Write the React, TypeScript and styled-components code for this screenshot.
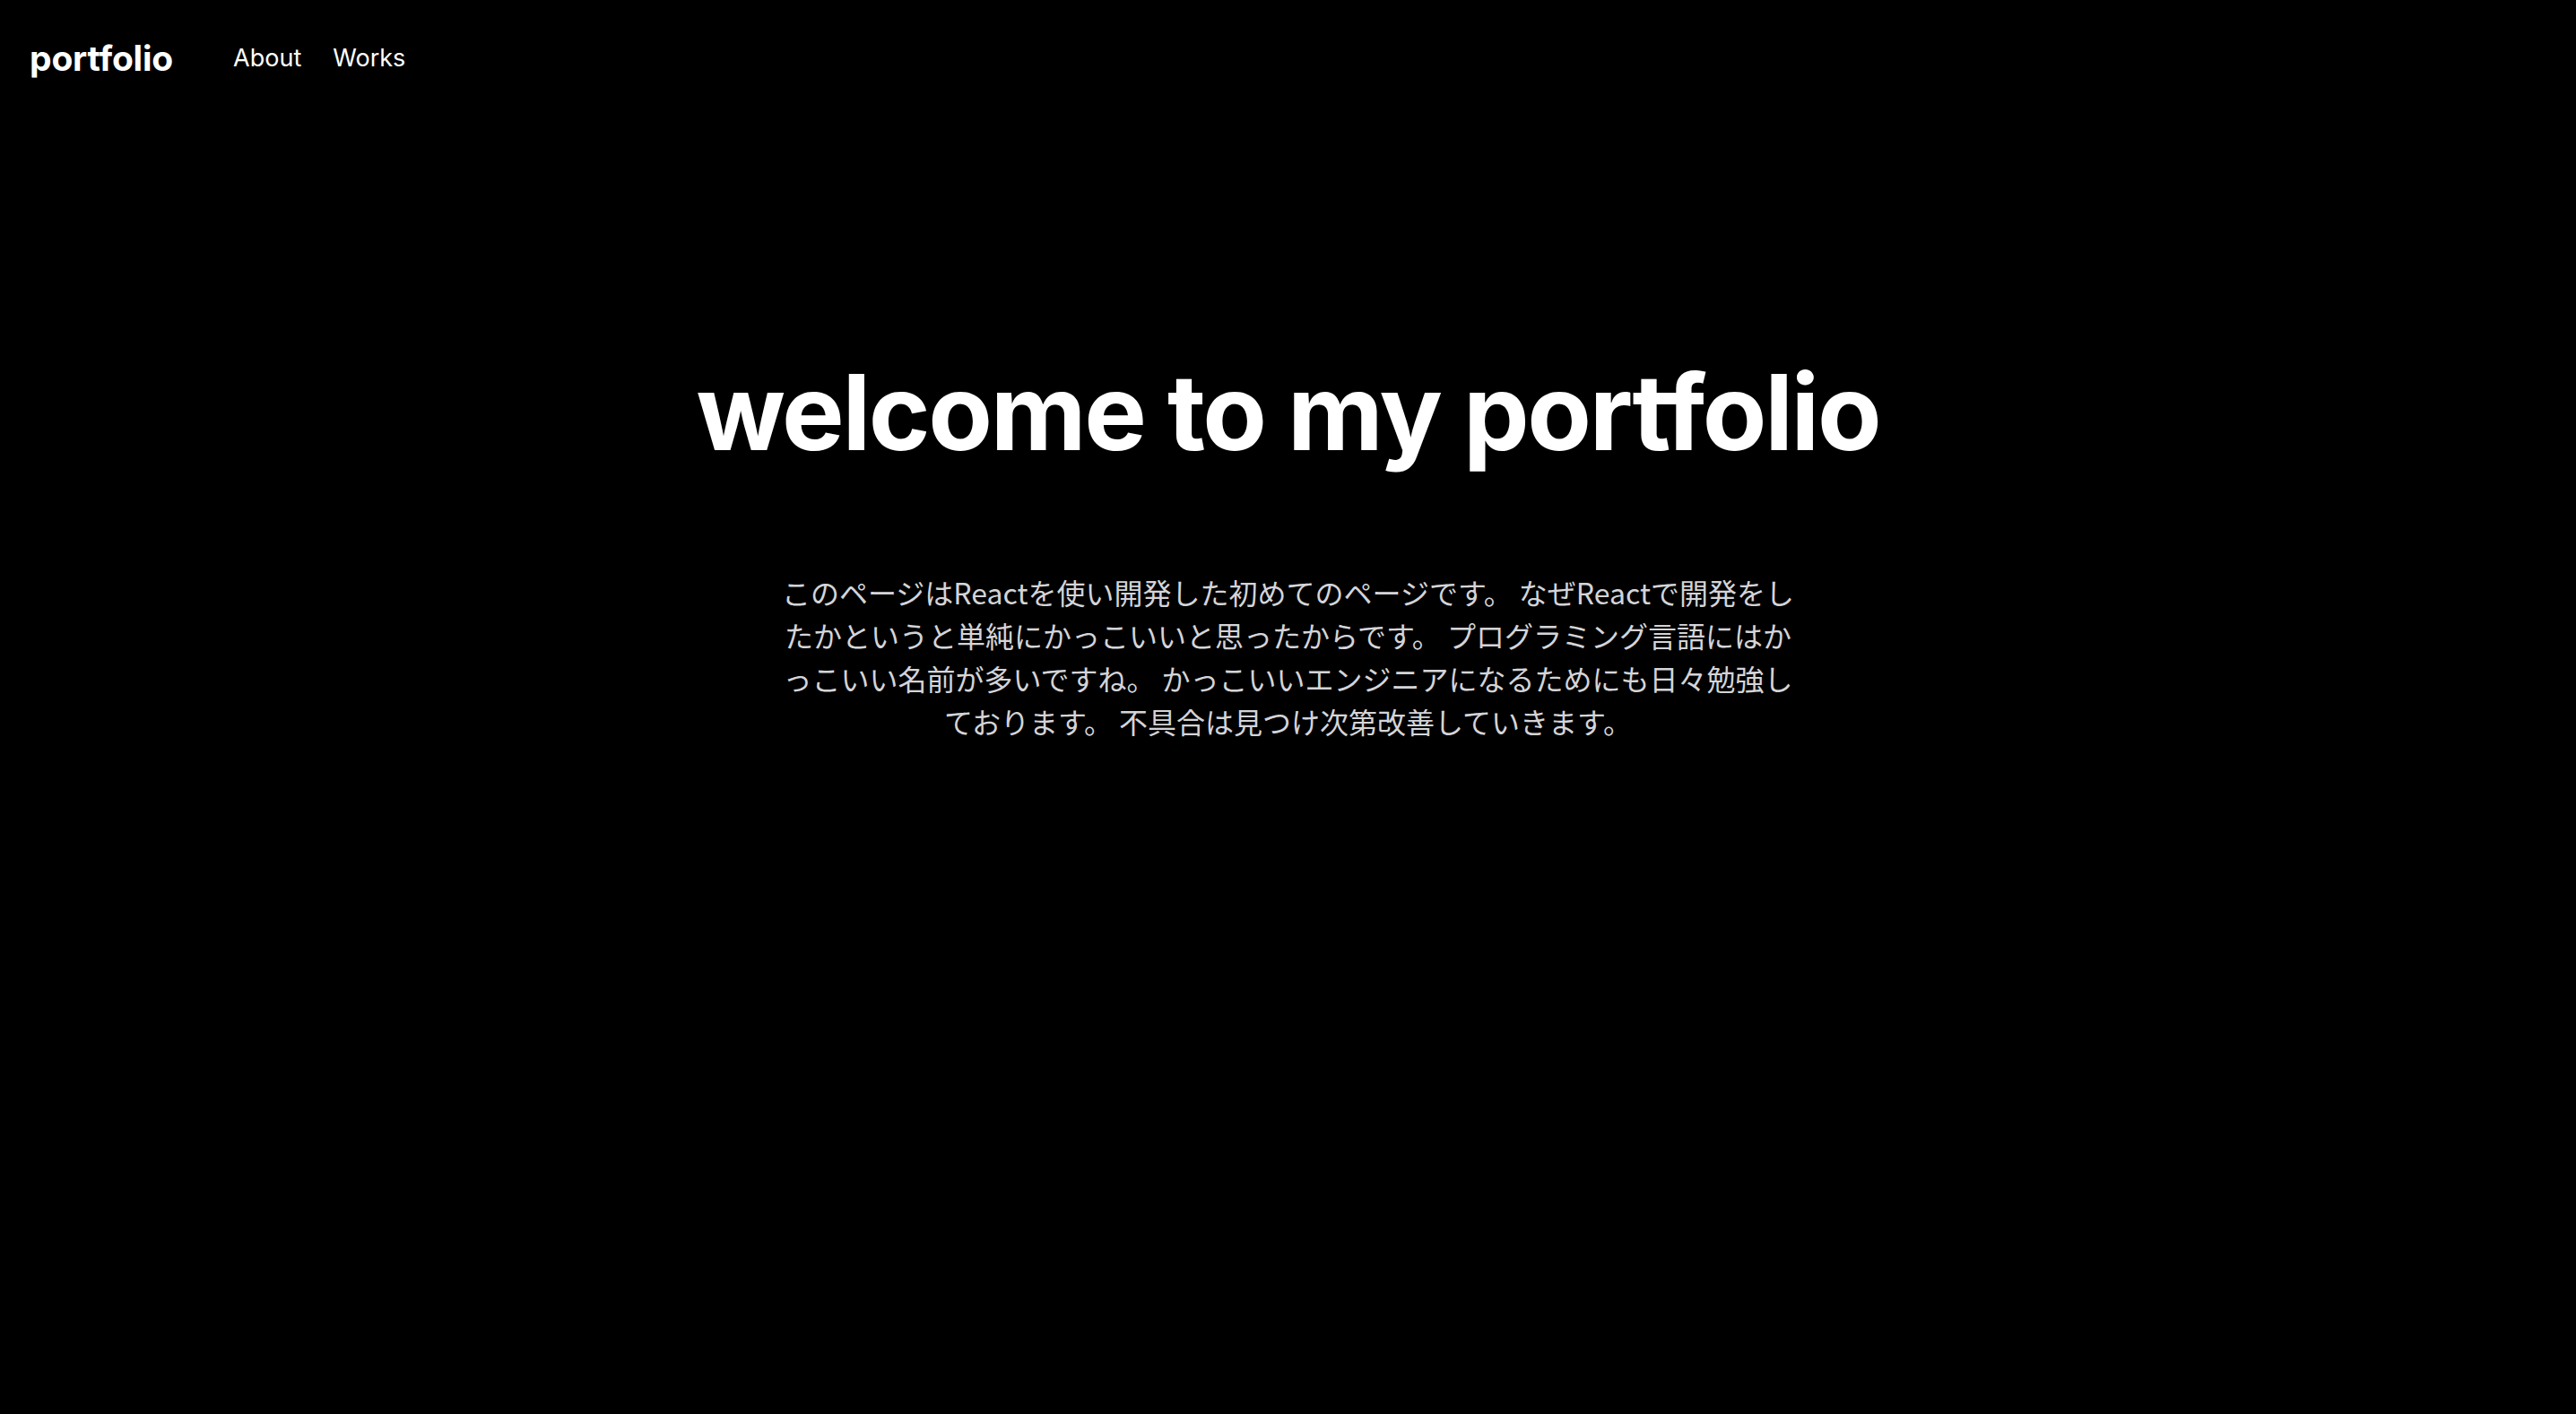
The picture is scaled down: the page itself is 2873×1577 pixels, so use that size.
import React from "react"
import styled, { createGlobalStyle } from "styled-components"

const GlobalStyle = createGlobalStyle`
	html, body {
		margin: 0;
		padding: 0;
		background: #000;
		color: #fff;
		font-family: Inter, "Noto Sans CJK JP", sans-serif;
		font-variant-ligatures: none;
		font-feature-settings: "liga" 0, "calt" 0;
	}
`

const Page = styled.div`
	min-height: 100vh;
	background: #000;
`

const Header = styled.header`
	display: flex;
	align-items: center;
	height: 128px;
	padding: 0 33px;
`

const Logo = styled.a`
	font-size: 39px;
	font-weight: 700;
	letter-spacing: -0.005em;
	color: #fff;
	text-decoration: none;
	margin-right: 67px;
`

const Nav = styled.nav`
	display: flex;
	gap: 35px;
`

const NavLink = styled.a`
	font-size: 27px;
	color: #fff;
	text-decoration: none;
`

const Hero = styled.main`
	display: flex;
	flex-direction: column;
	align-items: center;
	padding-top: 262px;
`

const Title = styled.h1`
	margin: 0;
	font-size: 117px;
	line-height: 1.2;
	font-weight: 700;
	letter-spacing: -0.02em;
	text-align: center;
`

const Lead = styled.p`
	margin: 106px 0 0;
	width: 1132px;
	font-family: "Noto Sans CJK JP", sans-serif;
	font-size: 32px;
	line-height: 48px;
	color: #d4d4d8;
	text-align: center;
`

const App = () => {
	return (
		<Page>
			<GlobalStyle />
			<Header>
				<Logo href="#">portfolio</Logo>
				<Nav>
					<NavLink href="#">About</NavLink>
					<NavLink href="#">Works</NavLink>
				</Nav>
			</Header>
			<Hero>
				<Title>welcome to my portfolio</Title>
				<Lead>
					このページはReactを使い開発した初めてのページです。 なぜReactで開発をしたかというと単純にかっこいいと思ったからです。 プログラミング言語にはかっこいい名前が多いですね。 かっこいいエンジニアになるためにも日々勉強しております。 不具合は見つけ次第改善していきます。
				</Lead>
			</Hero>
		</Page>
	)
}

export default App
